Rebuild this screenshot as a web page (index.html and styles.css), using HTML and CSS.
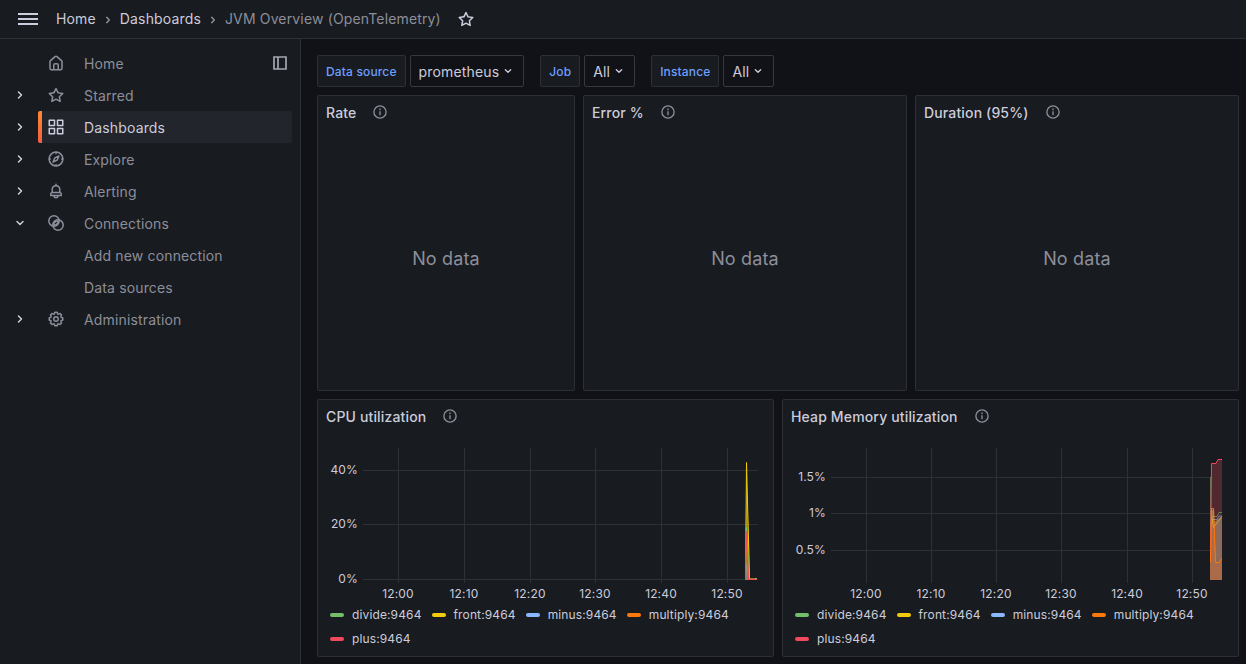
FILE: index.html
```html
<!DOCTYPE html>
<html lang="en">
<head>
  <meta charset="UTF-8">
  <title>JVM Overview (OpenTelemetry) - Dashboards</title>
  <link rel="stylesheet" href="styles.css">
</head>
<body>
  <!-- shared icons -->
  <svg class="sprite">
    <symbol id="star" viewBox="0 0 24 24"><path d="M22,9.67A1,1,0,0,0,21.14,9l-5.69-.83L12.9,3a1,1,0,0,0-1.8,0L8.55,8.16,2.86,9a1,1,0,0,0-.81.68,1,1,0,0,0,.25,1l4.13,4-1,5.68A1,1,0,0,0,6.9,21.44L12,18.77l5.1,2.67a.93.93,0,0,0,.46.12,1,1,0,0,0,.59-.19,1,1,0,0,0,.4-1l-1-5.68,4.13-4A1,1,0,0,0,22,9.67Zm-6.15,4a1,1,0,0,0-.29.88l.72,4.2-3.76-2a1.06,1.06,0,0,0-.94,0l-3.76,2,.72-4.2a1,1,0,0,0-.29-.88l-3-3,4.21-.61a1,1,0,0,0,.76-.55L12,5.7l1.88,3.82a1,1,0,0,0,.76.55l4.21.61Z"/></symbol>
    <symbol id="right" viewBox="0 0 24 24"><path d="M10 8l4 4-4 4" class="stroke"/></symbol>
    <symbol id="down" viewBox="0 0 24 24"><path d="M8 10l4 4 4-4" class="stroke"/></symbol>
    <symbol id="info" viewBox="0 0 24 24"><circle cx="12" cy="12" r="9.2" class="stroke"/><path d="M12 11.5v4.5M12 7.5v1" class="stroke"/></symbol>
  </svg>

  <header class="topbar">
    <svg class="menu" width="20" height="12"><path d="M0 0h20v2H0zM0 5h20v2H0zM0 10h20v2H0z"/></svg>
    <nav class="breadcrumbs">
      <a>Home</a>
      <svg class="icon"><use href="#right"/></svg>
      <a>Dashboards</a>
      <svg class="icon"><use href="#right"/></svg>
      <span>JVM Overview (OpenTelemetry)</span>
    </nav>
    <svg class="icon fav"><use href="#star"/></svg>
  </header>

  <div class="layout">
    <aside class="sidebar">
      <div class="nav-row">
        <span class="toggle"></span>
        <a class="nav-link">
          <svg class="nav-icon" viewBox="0 0 24 24"><path d="M20,8h0L14,2.74a3,3,0,0,0-4,0L4,8a3,3,0,0,0-1,2.26V19a3,3,0,0,0,3,3H18a3,3,0,0,0,3-3V10.25A3,3,0,0,0,20,8ZM14,20H10V15a1,1,0,0,1,1-1h2a1,1,0,0,1,1,1Zm5-1a1,1,0,0,1-1,1H16V15a3,3,0,0,0-3-3H11a3,3,0,0,0-3,3v5H6a1,1,0,0,1-1-1V10.25a1,1,0,0,1,.34-.75l6-5.25a1,1,0,0,1,1.32,0l6,5.25a1,1,0,0,1,.34.75Z"/></svg>
          Home
        </a>
        <svg class="dock" width="14" height="14"><path d="M1 1h12v12H1zM5 1v12"/></svg>
      </div>
      <div class="nav-row">
        <span class="toggle"><svg class="icon"><use href="#right"/></svg></span>
        <a class="nav-link"><svg class="nav-icon"><use href="#star"/></svg>Starred</a>
      </div>
      <div class="nav-row">
        <span class="toggle"><svg class="icon"><use href="#right"/></svg></span>
        <a class="nav-link active">
          <svg class="nav-icon" viewBox="0 0 24 24"><path d="M10,13H3a1,1,0,0,0-1,1v7a1,1,0,0,0,1,1h7a1,1,0,0,0,1-1V14A1,1,0,0,0,10,13ZM9,20H4V15H9ZM21,2H14a1,1,0,0,0-1,1v7a1,1,0,0,0,1,1h7a1,1,0,0,0,1-1V3A1,1,0,0,0,21,2ZM20,9H15V4h5Zm1,4H14a1,1,0,0,0-1,1v7a1,1,0,0,0,1,1h7a1,1,0,0,0,1-1V14A1,1,0,0,0,21,13Zm-1,7H15V15h5ZM10,2H3A1,1,0,0,0,2,3v7a1,1,0,0,0,1,1h7a1,1,0,0,0,1-1V3A1,1,0,0,0,10,2ZM9,9H4V4H9Z"/></svg>
          Dashboards
        </a>
      </div>
      <div class="nav-row">
        <span class="toggle"><svg class="icon"><use href="#right"/></svg></span>
        <a class="nav-link">
          <svg class="nav-icon" viewBox="0 0 24 24"><g class="stroke"><circle cx="12" cy="12" r="9.2"/><path d="M16 8l-2.5 5.5L8 16l2.5-5.5zM12 3v1.5M12 19.5v1.5M3 12h1.5M19.5 12H21"/></g></svg>
          Explore
        </a>
      </div>
      <div class="nav-row">
        <span class="toggle"><svg class="icon"><use href="#right"/></svg></span>
        <a class="nav-link">
          <svg class="nav-icon" viewBox="0 0 24 24"><path d="M18,13.18V10a6,6,0,0,0-5-5.91V3a1,1,0,0,0-2,0V4.09A6,6,0,0,0,6,10v3.18A3,3,0,0,0,4,16v2a1,1,0,0,0,1,1H8.14a4,4,0,0,0,7.72,0H19a1,1,0,0,0,1-1V16A3,3,0,0,0,18,13.18ZM8,10a4,4,0,0,1,8,0v3H8Zm4,10a2,2,0,0,1-1.72-1h3.44A2,2,0,0,1,12,20Zm6-3H6V16a1,1,0,0,1,1-1H17a1,1,0,0,1,1,1Z"/></svg>
          Alerting
        </a>
      </div>
      <div class="nav-row">
        <span class="toggle"><svg class="icon"><use href="#down"/></svg></span>
        <a class="nav-link">
          <svg class="nav-icon" viewBox="0 0 24 24"><g class="stroke"><circle cx="9.3" cy="9.3" r="6.9"/><circle cx="14.7" cy="14.7" r="6.9"/><path d="M12.8 8.6l2.6 2.6-4.2 4.2-2.6-2.6z"/></g></svg>
          Connections
        </a>
      </div>
      <div class="nav-row child"><a class="nav-link">Add new connection</a></div>
      <div class="nav-row child"><a class="nav-link">Data sources</a></div>
      <div class="nav-row">
        <span class="toggle"><svg class="icon"><use href="#right"/></svg></span>
        <a class="nav-link">
          <svg class="nav-icon" viewBox="0 0 24 24"><path d="M21.32,9.55l-1.89-.63.89-1.78A1,1,0,0,0,20.13,6L18,3.87a1,1,0,0,0-1.15-.19l-1.78.89-.63-1.89A1,1,0,0,0,13.5,2h-3a1,1,0,0,0-.95.68L8.92,4.57,7.14,3.68A1,1,0,0,0,6,3.87L3.87,6a1,1,0,0,0-.19,1.15l.89,1.78-1.89.63A1,1,0,0,0,2,10.5v3a1,1,0,0,0,.68.95l1.89.63-.89,1.78A1,1,0,0,0,3.87,18L6,20.13a1,1,0,0,0,1.15.19l1.78-.89.63,1.89a1,1,0,0,0,.95.68h3a1,1,0,0,0,.95-.68l.63-1.89,1.78.89A1,1,0,0,0,18,20.13L20.13,18a1,1,0,0,0,.19-1.15l-.89-1.78,1.89-.63A1,1,0,0,0,22,13.5v-3A1,1,0,0,0,21.32,9.55ZM20,12.78l-1.2.4A2,2,0,0,0,17.64,16l.57,1.14-1.1,1.1L16,17.64a2,2,0,0,0-2.79,1.16l-.4,1.2H11.22l-.4-1.2A2,2,0,0,0,8,17.64l-1.14.57-1.1-1.1L6.36,16A2,2,0,0,0,5.2,13.18L4,12.78V11.22l1.2-.4A2,2,0,0,0,6.36,8L5.79,6.89l1.1-1.1L8,6.36A2,2,0,0,0,10.82,5.2l.4-1.2h1.56l.4,1.2A2,2,0,0,0,16,6.36l1.14-.57,1.1,1.1L17.64,8a2,2,0,0,0,1.16,2.79l1.2.4ZM12,8a4,4,0,1,0,4,4A4,4,0,0,0,12,8Zm0,6a2,2,0,1,1,2-2A2,2,0,0,1,12,14Z"/></svg>
          Administration
        </a>
      </div>
    </aside>

    <main class="content">
      <div class="variables">
        <div class="variable">
          <label>Data source</label>
          <button>prometheus<svg class="icon"><use href="#down"/></svg></button>
        </div>
        <div class="variable">
          <label>Job</label>
          <button>All<svg class="icon"><use href="#down"/></svg></button>
        </div>
        <div class="variable">
          <label>Instance</label>
          <button>All<svg class="icon"><use href="#down"/></svg></button>
        </div>
      </div>

      <div class="row row-stats">
        <section class="panel">
          <h2>Rate<svg class="icon"><use href="#info"/></svg></h2>
          <div class="no-data">No data</div>
        </section>
        <section class="panel">
          <h2>Error %<svg class="icon"><use href="#info"/></svg></h2>
          <div class="no-data">No data</div>
        </section>
        <section class="panel">
          <h2>Duration (95%)<svg class="icon"><use href="#info"/></svg></h2>
          <div class="no-data">No data</div>
        </section>
      </div>

      <div class="row row-charts">
        <section class="panel">
          <h2>CPU utilization<svg class="icon"><use href="#info"/></svg></h2>
          <svg class="chart" viewBox="0 0 455 172">
            <path class="grid" d="M80.5 16v135M146.5 16v135M212.5 16v135M277.5 16v135M343.5 16v135M409.5 16v135M45 38.5h395M45 92.5h395M45 147.5h395"/>
            <g class="y-axis">
              <text x="40" y="42">40%</text>
              <text x="40" y="96">20%</text>
              <text x="40" y="151">0%</text>
            </g>
            <g class="x-axis">
              <text x="80" y="166">12:00</text>
              <text x="146" y="166">12:10</text>
              <text x="212" y="166">12:20</text>
              <text x="277" y="166">12:30</text>
              <text x="343" y="166">12:40</text>
              <text x="409" y="166">12:50</text>
            </g>
            <path class="series yellow" d="M427.5 148L428.5 30.5L431.5 146.5L433 147.5H439"/>
            <path class="area yellow" d="M427 148L428.5 31L432 148z"/>
            <path class="series green" d="M427.5 148L428.5 95L431 147H439"/>
            <path class="series orange" d="M427.5 148L428.5 105L430.5 147H439"/>
            <path class="area blue" d="M427 148V132H430V148z"/>
            <path class="series red" d="M427.5 148L428 99L430.5 147.5H439"/>
            <path class="series green" d="M437 146.5h2"/>
          </svg>
          <ul class="legend">
            <li><i class="green"></i>divide:9464</li>
            <li><i class="yellow"></i>front:9464</li>
            <li><i class="blue"></i>minus:9464</li>
            <li><i class="orange"></i>multiply:9464</li>
            <li><i class="red"></i>plus:9464</li>
          </ul>
        </section>

        <section class="panel">
          <h2>Heap Memory utilization<svg class="icon"><use href="#info"/></svg></h2>
          <svg class="chart" viewBox="0 0 455 172">
            <path class="grid" d="M83.5 16v135M148.5 16v135M213.5 16v135M278.5 16v135M344.5 16v135M409.5 16v135M48 45.5h391M48 81.5h391M48 118.5h391"/>
            <g class="y-axis">
              <text x="43" y="49">1.5%</text>
              <text x="43" y="85">1%</text>
              <text x="43" y="122">0.5%</text>
            </g>
            <g class="x-axis">
              <text x="83" y="166">12:00</text>
              <text x="148" y="166">12:10</text>
              <text x="213" y="166">12:20</text>
              <text x="278" y="166">12:30</text>
              <text x="344" y="166">12:40</text>
              <text x="409" y="166">12:50</text>
            </g>
            <path class="heap-top" d="M428 148V32H433L435 28H439V148z"/>
            <path class="heap-mid" d="M427 148V90H428V78H431V90L439 84V148z"/>
            <path class="heap-low" d="M427 148V100L429 78H431L433 130.5H439V148z"/>
            <path class="series green dim" d="M427.5 100V45"/>
            <path class="series green dim" d="M429 84.5H434L436 80.5H439"/>
            <path class="series blue dim" d="M429 87.5H434L436 84H439"/>
            <path class="series yellow dim" d="M428.5 84L430.5 95.5L434 91L439 84.5"/>
            <path class="series red" d="M427.5 128L428.5 31.5H433L435 27.5H439"/>
            <path class="series orange" d="M427.5 130L428.5 76.5H430.5L432.5 130.5H436.5L438.5 126.5"/>
          </svg>
          <ul class="legend">
            <li><i class="green"></i>divide:9464</li>
            <li><i class="yellow"></i>front:9464</li>
            <li><i class="blue"></i>minus:9464</li>
            <li><i class="orange"></i>multiply:9464</li>
            <li><i class="red"></i>plus:9464</li>
          </ul>
        </section>
      </div>
    </main>
  </div>
</body>
</html>
```
FILE: styles.css
```css
* {
  box-sizing: border-box;
}
body {
  margin: 0;
  height: 664px;
  overflow: hidden;
  background: #111217;
  color: #ccccdc;
  font-family: Inter, "Liberation Sans", sans-serif;
  font-size: 14px;
  line-height: 22px;
  letter-spacing: 0.15px;
}
svg {
  fill: currentColor;
  flex: none;
}
.sprite {
  display: none;
}
.stroke {
  fill: none;
  stroke: currentColor;
  stroke-width: 2;
  stroke-linecap: round;
  stroke-linejoin: round;
}
.icon {
  width: 16px;
  height: 16px;
}

.topbar {
  display: flex;
  align-items: center;
  height: 39px;
  padding-left: 18px;
  background: #181b1f;
  border-bottom: 1px solid #2e3036;
}
.breadcrumbs {
  display: flex;
  align-items: center;
  margin-left: 18px;
}
.breadcrumbs .icon {
  margin: 2px 4px 0;
  color: #9898a5;
}
.breadcrumbs span {
  color: #8d8e9b;
}
.fav {
  width: 18px;
  height: 18px;
  margin-left: 16px;
}

.layout {
  display: flex;
  height: 625px;
}
.sidebar {
  width: 301px;
  padding: 8px 8px 0 0;
  background: #181b1f;
  border-right: 1px solid #2e3036;
}
.nav-row {
  display: flex;
  align-items: center;
  height: 32px;
}
.toggle {
  display: flex;
  width: 38px;
  padding-left: 11px;
}
.toggle .icon {
  width: 18px;
  height: 18px;
}
.nav-link {
  display: flex;
  flex: 1;
  align-items: center;
  height: 32px;
  padding: 2px 0 0 9px;
  color: #8d8e9b;
}
.nav-icon {
  width: 18px;
  height: 18px;
  margin: -3px 19px 0 0;
}
.nav-link.active {
  color: #ccccdc;
  background: linear-gradient(#ff8833, #f55f3e) left / 4px 100% no-repeat, #22252b;
  border-radius: 2px;
}
.child .nav-link {
  padding-left: 84px;
}
.dock {
  margin-right: 5px;
  fill: none;
  stroke: #a5a5b2;
  stroke-width: 1.7;
}

.content {
  padding: 16px 7px 0 16px;
}
.variables {
  display: flex;
  gap: 16px;
}
.variable {
  display: flex;
  gap: 4px;
}
.variable label {
  height: 32px;
  padding: 0 8px;
  line-height: 31px;
  font-size: 12px;
  font-weight: 500;
  color: #6e9fff;
  background: #181b1f;
  border: 1px solid #2d2f35;
  border-radius: 2px;
}
.variable button {
  display: flex;
  align-items: center;
  height: 32px;
  padding: 1px 7px 0 8px;
  font: inherit;
  letter-spacing: inherit;
  color: inherit;
  background: #111217;
  border: 1px solid #37383f;
  border-radius: 2px;
}
.variable button .icon {
  margin: -1px 0 0 1px;
}

.row {
  display: grid;
  gap: 8px;
  margin-top: 8px;
}
.row-stats {
  grid-template-columns: 258px 324px 324px;
}
.row-charts {
  grid-template-columns: 457px 457px;
}
.panel {
  display: flex;
  flex-direction: column;
  background: #181b1f;
  border: 1px solid #2d2f35;
  border-radius: 2px;
}
.row-stats .panel {
  height: 296px;
}
.row-charts .panel {
  height: 258px;
}
.panel h2 {
  display: flex;
  align-items: center;
  height: 32px;
  margin: 0;
  padding: 2px 0 0 8px;
  font-size: 14px;
  font-weight: 500;
}
.panel h2 .icon {
  margin: -3px 0 0 16px;
  color: #8d8e9b;
}
.no-data {
  display: flex;
  flex: 1;
  align-items: center;
  justify-content: center;
  font-size: 18px;
  color: #8d8e9b;
}

.chart {
  width: 455px;
  height: 172px;
}
.chart text {
  font-size: 12px;
}
.y-axis {
  text-anchor: end;
}
.x-axis {
  text-anchor: middle;
}
.grid {
  fill: none;
  stroke: #2d3133;
}
.series {
  fill: none;
  stroke: currentColor;
}
.dim {
  stroke-opacity: 0.6;
}
.area {
  fill-opacity: 0.4;
}
.heap-top {
  fill: #4f2830;
}
.heap-mid {
  fill: #8d6b5c;
}
.heap-low {
  fill: #a96b4a;
}
.green { color: #73bf69; }
.yellow { color: #f2cc0c; }
.blue { color: #8ab8ff; }
.orange { color: #ff780a; }
.red { color: #f2495c; }

.legend {
  display: flex;
  flex-wrap: wrap;
  margin: -1px 0 0;
  padding: 0 12px;
  list-style: none;
  font-size: 12px;
  line-height: 24px;
  letter-spacing: 0.13px;
}
.legend li {
  display: flex;
  align-items: center;
  margin-right: 10px;
}
.legend i {
  width: 14px;
  height: 4px;
  margin-right: 8px;
  background: currentColor;
  border-radius: 2px;
}
```
